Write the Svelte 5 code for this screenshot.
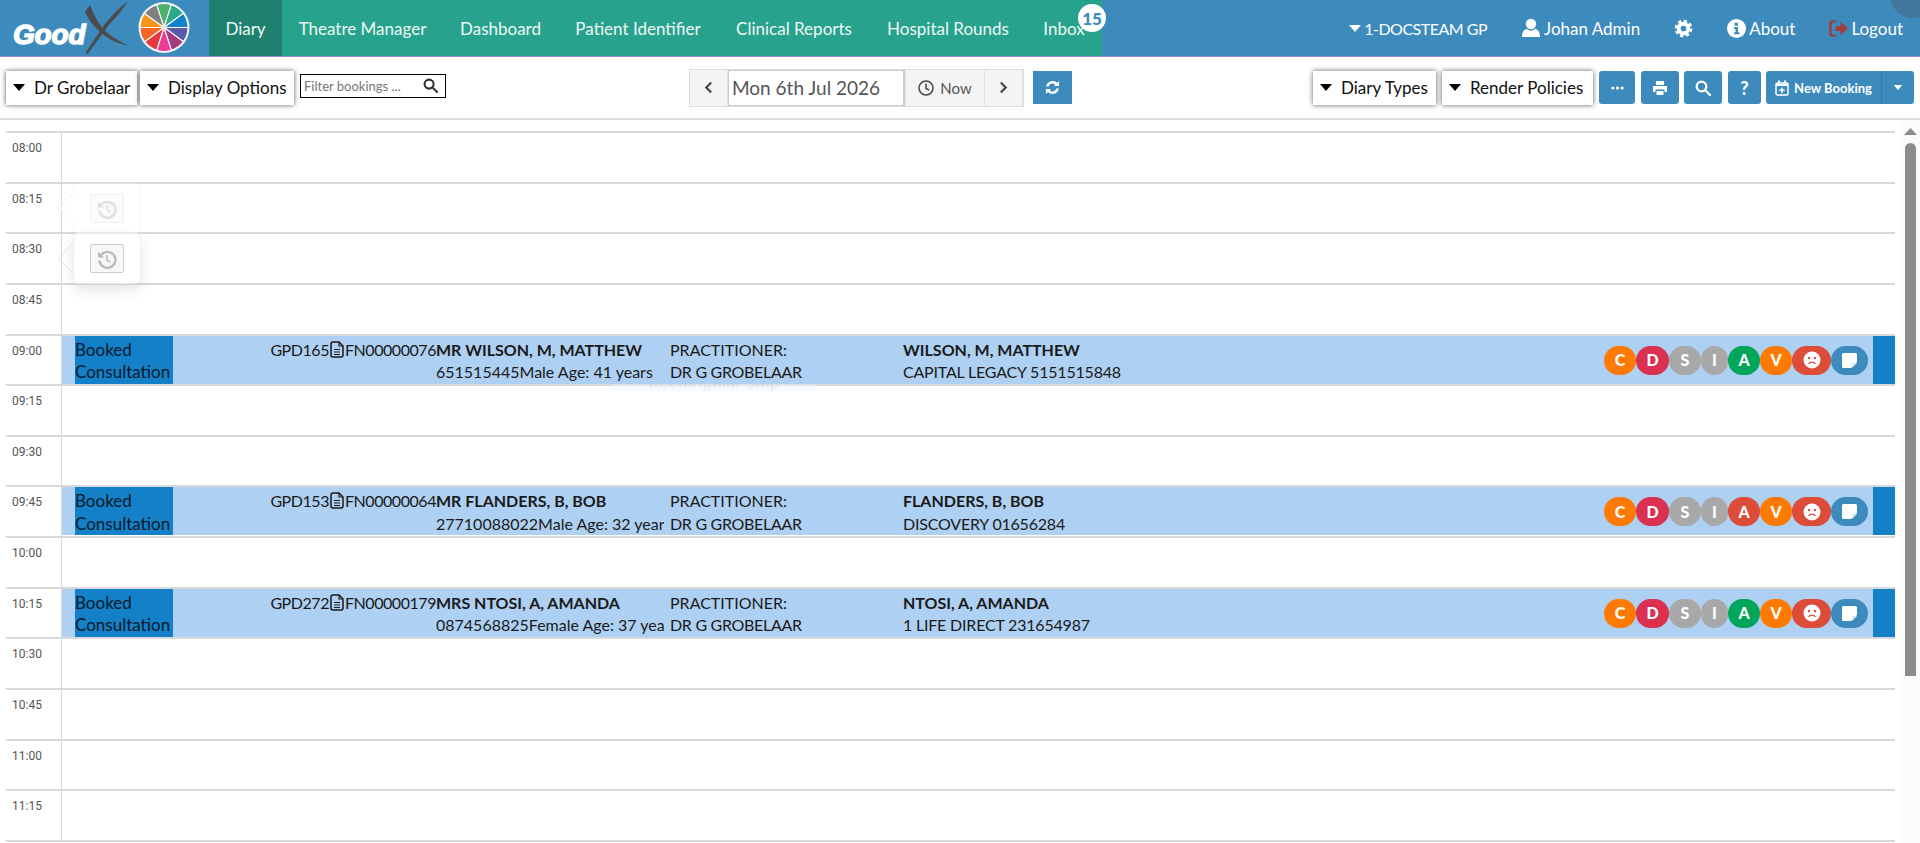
<script>
  const tabs = [
    { label: 'Diary', w: 73, active: true },
    { label: 'Theatre Manager', w: 161 },
    { label: 'Dashboard', w: 115 },
    { label: 'Patient Identifier', w: 160 },
    { label: 'Clinical Reports', w: 152 },
    { label: 'Hospital Rounds', w: 156 },
    { label: 'Inbox', w: 76, badge: 15 }
  ];

  const wheelColours = ['#4db36b', '#2aa88a', '#1283c9', '#5a58a8', '#a23a80', '#e8409a', '#e4393f', '#f26522', '#f7941e', '#808080'];

  // ten equal slices, the first one centred on 12 o'clock
  const slice = (i) => {
    const r = 24;
    const a = ((i * 36 - 18 - 90) * Math.PI) / 180;
    const b = ((i * 36 + 18 - 90) * Math.PI) / 180;
    return `M0 0L${r * Math.cos(a)} ${r * Math.sin(a)}A${r} ${r} 0 0 1 ${r * Math.cos(b)} ${r * Math.sin(b)}Z`;
  };

  const times = ['08:00', '08:15', '08:30', '08:45', '09:00', '09:15', '09:30', '09:45', '10:00', '10:15', '10:30', '10:45', '11:00', '11:15'];

  const bookings = {
    '09:00': {
      ref: 'GPD165', file: 'FN00000076', name: 'MR WILSON, M, MATTHEW', info: '651515445Male Age: 41 years',
      member: 'WILSON, M, MATTHEW', scheme: 'CAPITAL LEGACY 5151515848', auth: 'green'
    },
    '09:45': {
      ref: 'GPD153', file: 'FN00000064', name: 'MR FLANDERS, B, BOB', info: '27710088022Male Age: 32 years',
      member: 'FLANDERS, B, BOB', scheme: 'DISCOVERY 01656284', auth: 'coral'
    },
    '10:15': {
      ref: 'GPD272', file: 'FN00000179', name: 'MRS NTOSI, A, AMANDA', info: '0874568825Female Age: 37 years',
      member: 'NTOSI, A, AMANDA', scheme: '1 LIFE DIRECT 231654987', auth: 'green'
    }
  };
</script>

{#snippet caret()}
  <svg class="caret" viewBox="0 0 12 7"><path d="M0 0h12L6 7z" /></svg>
{/snippet}

{#snippet historyIcon()}
  <svg viewBox="0 0 20 20" width="20" height="20" fill="none" stroke="#bbb" stroke-width="2.400">
    <path d="M4 6a8 8 0 1 1-1.600 5.500" />
    <path d="M1 2.500v6h6z" fill="#bbb" stroke="none" />
    <path d="M10 6v5l3.500 2" stroke-width="1.600" />
  </svg>
{/snippet}

<header class="navbar">
  <div class="logo">
    <svg width="209" height="56" viewBox="0 0 209 56">
      <path d="M90 5c5 14 12 24 20 30 6 4 12 8 19 11-9-2-17-5-24-10-9-7-15-14-20-24z" fill="#4b4b4b" />
      <path d="M128 1c-6 10-13 17-20 25L87 55l-1-3 18-27c7-9 15-17 24-24z" fill="#4b4b4b" />
      <text class="good" x="13" y="43.500">Good</text>
      <g transform="translate(164 27.500)">
        <circle r="25.500" fill="#fff" opacity=".85" />
        {#each wheelColours as colour, i}
          <path d={slice(i)} fill={colour} stroke="#fff" stroke-width="1.100" />
        {/each}
        <circle r="3" fill="#e8e8e8" />
      </g>
    </svg>
  </div>
  <nav class="tabs">
    {#each tabs as tab}
      <a class="tab" class:active={tab.active} style="width:{tab.w}px">
        {tab.label}
        {#if tab.badge}<span class="badge">{tab.badge}</span>{/if}
      </a>
    {/each}
  </nav>
  <div class="user-menu">
    <a class="link practice">
      <svg class="caret white" viewBox="0 0 12 7"><path d="M0 0h12L6 7z" /></svg>1-DOCSTEAM GP
    </a>
    <a class="link">
      <svg viewBox="0 0 20 20" width="20" height="20" fill="#fff"><circle cx="10" cy="6" r="5.200" /><path d="M1 19c0-6 3-8 5-8 1 1 2.500 1.500 4 1.500s3-.5 4-1.500c2 0 5 2 5 8z" /></svg>Johan Admin
    </a>
    <a class="link">
      <svg viewBox="0 0 20 20" width="19" height="19" fill="none" stroke="#fff"><circle cx="10" cy="10" r="5" stroke-width="4" /><circle cx="10" cy="10" r="7.600" stroke-width="3.400" stroke-dasharray="3.400 2.570" /></svg>
    </a>
    <a class="link">
      <svg viewBox="0 0 20 20" width="19" height="19"><circle cx="10" cy="10" r="10" fill="#fff" /><path d="M8 4h3.500v3H8zM7.500 8.500h4V14H13v2H7.500v-2H9v-3.500H7.500z" fill="#3d8bbd" /></svg>About
    </a>
    <a class="link">
      <svg viewBox="0 0 20 20" width="19" height="19" fill="none"><path d="M7 2.500H3.500A2 2 0 0 0 1.500 4.500v11a2 2 0 0 0 2 2H7" stroke="#a33c3c" stroke-width="2.600" /><path d="M7 7.500h5V3l8 7-8 7v-4.500H7z" fill="#a33c3c" /></svg>Logout
    </a>
  </div>
  <span class="ripple"></span>
</header>

<section class="toolbar">
  <div class="tool-group">
    <button class="drop">{@render caret()}Dr Grobelaar</button>
    <button class="drop">{@render caret()}Display Options</button>
    <div class="filter">
      <span>Filter bookings ...</span>
      <svg viewBox="0 0 16 16" width="15" height="15" fill="none" stroke="#333" stroke-width="2.200"><circle cx="6.500" cy="6.500" r="4.800" /><path d="M10 10l5 5" stroke-linecap="round" /></svg>
    </div>
  </div>
  <div class="date-area">
    <div class="date-nav">
      <button class="date-btn arrow">
        <svg viewBox="0 0 10 14" width="9" height="13" fill="none" stroke="#444" stroke-width="2.400"><path d="M8 1.500L2.500 7 8 12.500" /></svg>
      </button>
      <div class="date-value">Mon 6th Jul 2026</div>
      <button class="date-btn now">
        <svg viewBox="0 0 16 16" width="16" height="16" fill="none" stroke="#444" stroke-width="1.500"><circle cx="8" cy="8" r="7" /><path d="M8 3.500V8.500l3 1.500" /></svg>
        Now
      </button>
      <button class="date-btn arrow">
        <svg viewBox="0 0 10 14" width="9" height="13" fill="none" stroke="#444" stroke-width="2.400"><path d="M2 1.500L7.500 7 2 12.500" /></svg>
      </button>
    </div>
    <button class="action refresh">
      <svg viewBox="0 0 16 16" width="15" height="15" fill="none" stroke="#fff" stroke-width="2.500"><path d="M2.500 7a5.700 5.700 0 0 1 10-2.500" /><path d="M13.500 9a5.700 5.700 0 0 1-10 2.500" /><path d="M15 1v5.500H9.500zM1 15V9.500h5.500z" fill="#fff" stroke="none" /></svg>
    </button>
  </div>
  <div class="tool-group end">
    <button class="drop types">{@render caret()}Diary Types</button>
    <button class="drop policies">{@render caret()}Render Policies</button>
    <button class="action dots">
      <svg viewBox="0 0 14 4" width="13" height="4" fill="#fff"><circle cx="2" cy="2" r="1.700" /><circle cx="7" cy="2" r="1.700" /><circle cx="12" cy="2" r="1.700" /></svg>
    </button>
    <button class="action print">
      <svg viewBox="0 0 16 16" width="16" height="16" fill="#fff"><path d="M4 1h8v4H4zM1 6h14v6h-2.500V9.500h-9V12H1zM4.500 11h7v4h-7z" /></svg>
    </button>
    <button class="action search">
      <svg viewBox="0 0 16 16" width="16" height="16" fill="none" stroke="#fff" stroke-width="2.300"><circle cx="6.500" cy="6.500" r="4.800" /><path d="M10 10l5 5" stroke-linecap="round" /></svg>
    </button>
    <button class="action help">?</button>
    <div class="new-booking">
      <button class="new-main">
        <svg viewBox="0 0 14 16" width="14" height="16" fill="none" stroke="#fff" stroke-width="1.500"><rect x="1" y="3" width="12" height="12" rx="1.500" /><path d="M4 0.500v3M10 0.500v3" stroke-width="2" /><path d="M1 5h12" stroke-width="2" /><path d="M7 7.500v5.500M4.300 10.200h5.400" /></svg>
        New Booking
      </button>
      <button class="new-more"><svg class="caret small white" viewBox="0 0 12 7"><path d="M0 0h12L6 7z" /></svg></button>
    </div>
  </div>
</section>

<main class="schedule">
  <div class="slots">
    {#each times as time}
      {@const b = bookings[time]}
      <div class="slot">
        <div class="time">{time}</div>
        <div class="lane">
          {#if b}
            <div class="booking">
              <div class="status">Booked Consultation</div>
              <div class="refs">
                {b.ref}
                <svg viewBox="0 0 14 17" width="14" height="17" fill="none" stroke="#1a1a1a" stroke-width="1.500"><path d="M1 3a2 2 0 0 1 2-2h6l4 4v9a2 2 0 0 1-2 2H3a2 2 0 0 1-2-2z" /><path d="M4 8.500h6M4 11h6M4 13.500h6M9 1v4h4" stroke-width="1.200" /></svg>
                {b.file}
              </div>
              <div class="cell patient"><strong>{b.name}</strong><span>{b.info}</span></div>
              <div class="cell practitioner"><span>PRACTITIONER:</span><span class="doctor">DR G GROBELAAR</span></div>
              <div class="cell member"><strong>{b.member}</strong><span class="scheme">{b.scheme}</span></div>
              <div class="pills">
                <span class="pill orange w32">C</span>
                <span class="pill crimson w33">D</span>
                <span class="pill grey w32">S</span>
                <span class="pill grey w27">I</span>
                <span class="pill {b.auth} w32">A</span>
                <span class="pill orange w32">V</span>
                <span class="pill coral w39">
                  <svg viewBox="0 0 18 18" width="18" height="18"><circle cx="9" cy="9" r="8.500" fill="#fff" /><circle cx="6" cy="7" r="1.200" fill="#dd4b39" /><circle cx="12" cy="7" r="1.200" fill="#dd4b39" /><path d="M5.500 13c1.500-2.400 5.500-2.400 7 0" fill="none" stroke="#dd4b39" stroke-width="1.200" /></svg>
                </span>
                <span class="pill blue w37">
                  <svg viewBox="0 0 15 15" width="15" height="15"><path d="M1.500 0h12A1.500 1.500 0 0 1 15 1.500V9l-6 6H1.500A1.500 1.500 0 0 1 0 13.500v-12A1.500 1.500 0 0 1 1.500 0z" fill="#fff" /><path d="M15 10l-5 5v-5z" fill="#dbe9f3" /></svg>
                </span>
              </div>
              <div class="edge"></div>
            </div>
          {/if}
        </div>
      </div>
    {/each}
    <div class="slot-end"></div>
  </div>

  <div class="scrollbar">
    <svg viewBox="0 0 13 7" width="13" height="7"><path d="M6.500 0L13 7H0z" fill="#8c8c8c" /></svg>
    <div class="thumb"></div>
  </div>

  <div class="popover faded"><button class="history">{@render historyIcon()}</button></div>
  <div class="popover second"><button class="history">{@render historyIcon()}</button></div>
  <div class="ghost-tip">Rectangular Ship</div>
</main>

<style>
  :global(body) {
    margin: 0;
    background: #fff;
    overflow: hidden;
  }

  :global(#app) {
    font-family: Lato, "Noto Sans", sans-serif;
    color: #111;
  }

  button {
    font: inherit;
    border: 0;
    padding: 0;
    cursor: pointer;
  }

  /* Top nav */
  .navbar {
    display: flex;
    height: 56px;
    background: #3d8bbd;
    border-bottom: 1px solid #9a8fd8;
    position: relative;
    overflow: hidden;
  }

  .logo {
    width: 209px;
    flex: none;
  }

  .good {
    font-family: "Liberation Sans", sans-serif;
    font-weight: 700;
    font-style: italic;
    font-size: 28px;
    letter-spacing: -.2px;
    fill: #fff;
    stroke: #fff;
    stroke-width: 1.400px;
  }

  .tabs {
    display: flex;
    background: #27a28c;
  }

  .tab {
    display: flex;
    align-items: center;
    justify-content: center;
    color: #eef8f5;
    font-size: 17px;
    position: relative;
    white-space: nowrap;
  }

  .tab.active {
    background: #1f8070;
  }

  .badge {
    position: absolute;
    left: 52px;
    top: 4px;
    width: 28px;
    height: 28px;
    border-radius: 50%;
    background: #fff;
    color: #3d8bbd;
    font-weight: 900;
    font-size: 17px;
    display: flex;
    align-items: center;
    justify-content: center;
  }

  .user-menu {
    margin-left: auto;
    display: flex;
    align-items: center;
  }

  .link {
    display: flex;
    align-items: center;
    gap: 3px;
    padding: 0 17px;
    color: #fff;
    font-size: 17px;
    white-space: nowrap;
  }

  .practice {
    font-size: 16px;
    letter-spacing: -.5px;
  }

  .ripple {
    position: absolute;
    right: -16px;
    top: -28px;
    width: 46px;
    height: 46px;
    border-radius: 50%;
    background: rgba(70, 90, 110, .45);
  }

  .caret {
    width: 12px;
    height: 7px;
    fill: #000;
    flex: none;
  }

  .caret.white {
    fill: #fff;
  }

  .caret.small {
    width: 10px;
    height: 5px;
  }

  /* Toolbar */
  .toolbar {
    display: grid;
    grid-template-columns: 683px 383px 1fr;
    align-items: center;
    height: 61px;
    padding: 0 6px;
    border-bottom: 2px solid #ddd;
  }

  .tool-group {
    display: flex;
    align-items: center;
  }

  .tool-group.end {
    justify-content: flex-end;
  }

  .drop {
    height: 34px;
    display: flex;
    align-items: center;
    gap: 9px;
    padding: 0 7px;
    width: 131px;
    box-sizing: border-box;
    background: #fff;
    color: #111;
    font-size: 17px;
    white-space: nowrap;
    box-shadow: 0 0 5px rgba(0, 0, 0, .65);
    margin-right: 3px;
  }

  .drop + .drop {
    width: 154px;
  }

  .drop.types {
    width: 123px;
    margin-right: 6px;
  }

  .drop.policies {
    width: 151px;
    margin-right: 6px;
  }

  .filter {
    width: 146px;
    height: 24px;
    box-sizing: border-box;
    margin-left: 3px;
    margin-bottom: 4px;
    border: 1px solid #000;
    display: flex;
    align-items: center;
    justify-content: space-between;
    padding: 0 7px 0 3px;
    color: #777;
    font-size: 13px;
  }

  .date-area {
    display: flex;
    align-items: center;
  }

  .date-nav {
    display: flex;
    width: 335px;
    height: 38px;
    background: #e4e4e4;
    gap: 1px;
    box-sizing: border-box;
    border: 1px solid #ddd;
  }

  .date-btn {
    background: #f4f4f4;
    color: #555;
    display: flex;
    align-items: center;
    justify-content: center;
  }

  .arrow {
    width: 37px;
  }

  .date-value {
    width: 177px;
    background: #fff;
    border: 1px solid #ccc;
    border-width: 1px 2px 1px 1px;
    box-sizing: border-box;
    color: #555;
    font-size: 19px;
    line-height: 34px;
    padding-left: 3px;
    white-space: nowrap;
  }

  .now {
    width: 78px;
    gap: 6px;
    font-size: 15px;
  }

  .action {
    height: 33px;
    background: #3d8bbd;
    color: #fff;
    display: flex;
    align-items: center;
    justify-content: center;
    border-radius: 3px;
    margin-right: 5px;
  }

  .refresh {
    width: 39px;
    margin: 0 0 0 9px;
    border-radius: 0;
  }

  .dots {
    width: 36px;
    margin-right: 6px;
  }

  .print {
    width: 38px;
  }

  .search {
    width: 38px;
    margin-right: 6px;
  }

  .help {
    width: 33px;
    font-weight: 900;
    font-size: 18px;
  }

  .new-booking {
    display: flex;
    width: 148px;
    height: 33px;
    background: #3d8bbd;
    border-radius: 3px;
    color: #fff;
  }

  .new-main,
  .new-more {
    background: none;
    color: #fff;
    display: flex;
    align-items: center;
    justify-content: center;
  }

  .new-main {
    width: 116px;
    gap: 5px;
    font-size: 13px;
    font-weight: 700;
    white-space: nowrap;
    border-right: 1px solid #347aa6;
  }

  .new-more {
    flex: 1;
  }

  /* Diary grid */
  .schedule {
    position: relative;
    display: flex;
    height: 723px;
    overflow: hidden;
  }

  .slots {
    width: 1889px;
    margin-left: 6px;
    padding-top: 11px;
  }

  .slot {
    display: flex;
    height: 50.640px;
    box-sizing: border-box;
    border-top: 2px solid #d9d9d9;
  }

  .slot-end {
    border-top: 2px solid #d9d9d9;
  }

  .time {
    width: 55px;
    padding: 7px 0 0 6px;
    box-sizing: border-box;
    font-family: Roboto, sans-serif;
    font-size: 12px;
    line-height: 16px;
    color: #555;
  }

  .lane {
    flex: 1;
    border-left: 1px solid #d9d9d9;
    min-width: 0;
  }

  .booking {
    display: flex;
    position: relative;
    z-index: 1;
    height: 48px;
    background: #aed0f2;
    color: #1a1a1a;
    font-size: 16px;
    line-height: 22.500px;
    white-space: nowrap;
  }

  .status {
    width: 98px;
    margin-left: 13px;
    background: #1380c8;
    color: #06192a;
    font-size: 17px;
    white-space: normal;
    flex: none;
    padding-top: 3px;
    box-sizing: border-box;
  }

  .refs {
    width: 263px;
    flex: none;
    display: flex;
    justify-content: flex-end;
    gap: 1px;
    padding-top: 3px;
    box-sizing: border-box;
    letter-spacing: -.45px;
  }

  .refs svg {
    margin-top: 2px;
  }

  .cell {
    display: flex;
    flex-direction: column;
    flex: none;
    overflow: hidden;
    padding-top: 3px;
    box-sizing: border-box;
  }

  .patient {
    width: 228px;
    margin-right: 6px;
  }

  .practitioner {
    width: 233px;
  }

  .doctor {
    letter-spacing: -.3px;
  }

  .member {
    flex: 1;
  }

  .scheme {
    letter-spacing: -.2px;
  }

  .pills {
    display: flex;
    align-items: center;
    margin-left: auto;
    margin-right: 5px;
    height: 48px;
    padding-top: 1px;
    box-sizing: border-box;
  }

  .pill {
    height: 29px;
    border-radius: 15px;
    display: flex;
    align-items: center;
    justify-content: center;
    color: #fff;
    font-weight: 900;
    font-size: 16px;
  }

  .w27 { width: 27px; }
  .w32 { width: 32px; }
  .w33 { width: 33px; }
  .w37 { width: 37px; }
  .w39 { width: 39px; }

  .orange { background: #ff7a00; }
  .crimson { background: #dc3050; }
  .grey { background: #a8a8a8; }
  .green { background: #00a65a; }
  .coral { background: #dd4b39; }
  .blue { background: #3d8bbd; }

  .edge {
    width: 22px;
    background: #1380c8;
    flex: none;
  }

  /* Scrollbar */
  .scrollbar {
    flex: none;
    width: 19px;
    margin-left: 6px;
    background: #fbfbfb;
    display: flex;
    flex-direction: column;
    align-items: center;
    padding-top: 8px;
    box-sizing: border-box;
  }

  .thumb {
    width: 11px;
    height: 533px;
    margin-top: 8px;
    background: #8c8c8c;
    border-radius: 6px 6px 0 0;
  }

  /* Leftover popovers caught fading out */
  .popover {
    position: absolute;
    left: 73px;
    width: 68px;
    height: 51px;
    box-sizing: border-box;
    background: #fff;
    border: 1px solid #eee;
    border-radius: 5px;
    display: flex;
    align-items: center;
    justify-content: center;
  }

  .popover::before {
    content: "";
    position: absolute;
    left: -13px;
    top: 13px;
    width: 20px;
    height: 20px;
    background: #fff;
    border-left: 1px solid #e8e8e8;
    border-bottom: 1px solid #e8e8e8;
    transform: rotate(45deg) scaleX(.9);
    z-index: -1;
  }

  .popover.faded {
    top: 63px;
    opacity: .45;
  }

  .popover.second {
    top: 113px;
    box-shadow: 0 6px 14px rgba(0, 0, 0, .1);
  }

  .history {
    width: 34px;
    height: 29px;
    background: #f7f7f7;
    border: 1px solid #ccc;
    border-radius: 2px;
    display: flex;
    align-items: center;
    justify-content: center;
  }

  .faded .history {
    border-color: #ddd;
  }

  .ghost-tip {
    position: absolute;
    left: 613px;
    top: 246px;
    width: 202px;
    height: 25px;
    overflow: hidden;
    background: rgba(232, 244, 255, .4);
    color: rgba(60, 90, 120, .1);
    font-size: 18px;
    line-height: 30px;
    text-align: center;
  }
</style>
